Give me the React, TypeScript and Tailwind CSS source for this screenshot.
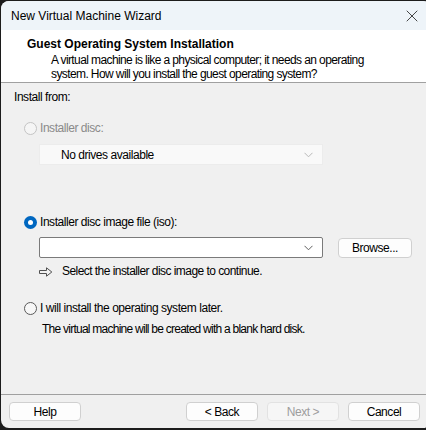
import { X } from "lucide-react";

function Radio({ checked, disabled }: { checked?: boolean; disabled?: boolean }) {
  if (checked) {
    return (
      <span className="w-[13px] h-[13px] rounded-full bg-[#0067c0] flex items-center justify-center shrink-0">
        <span className="w-[5px] h-[5px] rounded-full bg-white" />
      </span>
    );
  }
  return (
    <span
      className={`w-[13px] h-[13px] rounded-full border shrink-0 ${
        disabled ? "border-[#c4c4c4] bg-[#f5f5f5]" : "border-[#5a5a5a] bg-[#f7f7f7]"
      }`}
    />
  );
}

function Chevron({ color }: { color: string }) {
  return (
    <svg width="9" height="6" viewBox="0 0 9 6" fill="none">
      <path d="M0.5 0.8 L4.5 4.8 L8.5 0.8" stroke={color} strokeWidth="1" />
    </svg>
  );
}

function Button({ label, disabled }: { label: string; disabled?: boolean }) {
  return (
    <div
      className={`w-[72px] h-[19px] rounded-[4px] border flex items-center justify-center ${
        disabled
          ? "bg-[#f6f6f6] border-[#e2e2e2] text-[#9d9d9d]"
          : "bg-[#fdfdfd] border-[#d0d0d0] text-black"
      }`}
    >
      {label}
    </div>
  );
}

export default function App() {
  return (
    <div className="w-[426px] h-[430px] bg-[#1c1c1c] overflow-hidden pl-[1px] pt-[1px]">
      <div
        className="w-[430px] h-[427px] rounded-lg overflow-hidden bg-[#f0f0f0] flex flex-col text-[12px] text-black tracking-[-0.45px]"
        style={{ fontFamily: '"Segoe UI", "Liberation Sans", Arial, sans-serif' }}
      >
        {/* Title bar */}
        <div className="h-[29px] bg-[#eef4f9] flex items-center pl-[10px] pr-[9px] shrink-0">
          <span className="leading-none tracking-normal">New Virtual Machine Wizard</span>
          <X className="ml-auto" size={20} strokeWidth={1} color="#222" />
        </div>

        {/* Header */}
        <div className="h-[53px] bg-white border-b border-[#a0a0a0] shrink-0 pl-[26px] pt-[7px]">
          <div className="font-bold leading-[15px] tracking-normal">Guest Operating System Installation</div>
          <div className="pl-[24px] leading-[14px] mt-[1px] tracking-[-0.6px]">
            A virtual machine is like a physical computer; it needs an operating
            <br />
            system. How will you install the guest operating system?
          </div>
        </div>

        {/* Body */}
        <div className="flex-1 pl-[13px] pt-[7px]">
          <div className="leading-[15px]">Install from:</div>

          <div className="flex items-center gap-[3px] mt-[16px] pl-[10px] text-[#8a8a8a]">
            <Radio disabled />
            <span className="leading-[15px]">Installer disc:</span>
          </div>

          <div className="ml-[25px] mt-[8px] w-[284px] h-[21px] bg-[#f9f9f9] border border-[#ececec] flex items-center pl-[21px] pr-[9px]">
            <span className="leading-none">No drives available</span>
            <span className="ml-auto">
              <Chevron color="#b8b8b8" />
            </span>
          </div>

          <div className="flex items-center gap-[3px] mt-[50px] pl-[10px]">
            <Radio checked />
            <span className="leading-[15px]">Installer disc image file (iso):</span>
          </div>

          <div className="flex items-center mt-[7px] ml-[25px]">
            <div className="w-[284px] h-[21px] bg-white border border-[#7a7a7a] rounded-[2px] flex items-center justify-end pr-[9px]">
              <Chevron color="#606060" />
            </div>
            <div className="ml-[15px]">
              <div className="w-[74px] h-[20px] rounded-[4px] border border-[#d0d0d0] bg-[#fdfdfd] flex items-center justify-center">
                Browse...
              </div>
            </div>
          </div>

          <div className="flex items-center mt-[6px] ml-[25px]">
            <svg width="14" height="10" viewBox="0 0 14 10" fill="none">
              <path
                d="M0.5 3.5 H7.5 V0.8 L12.8 5 L7.5 9.2 V6.5 H0.5 Z"
                stroke="#505050"
                strokeWidth="1"
                strokeLinejoin="miter"
              />
            </svg>
            <span className="ml-[9px] leading-[15px] tracking-[-0.55px]">Select the installer disc image to continue.</span>
          </div>

          <div className="flex items-center gap-[3px] mt-[22px] pl-[10px]">
            <Radio />
            <span className="leading-[15px]">I will install the operating system later.</span>
          </div>

          <div className="mt-[6px] pl-[28px] leading-[15px] tracking-[-0.75px]">
            The virtual machine will be created with a blank hard disk.
          </div>
        </div>

        {/* Footer */}
        <div className="h-[34px] border-t border-[#a0a0a0] shrink-0 flex items-start pt-[7px] pl-[8px]">
          <Button label="Help" />
          <div className="ml-[105px] flex gap-[9px]">
            <Button label="< Back" />
            <Button label="Next >" disabled />
            <Button label="Cancel" />
          </div>
        </div>
      </div>
    </div>
  );
}
